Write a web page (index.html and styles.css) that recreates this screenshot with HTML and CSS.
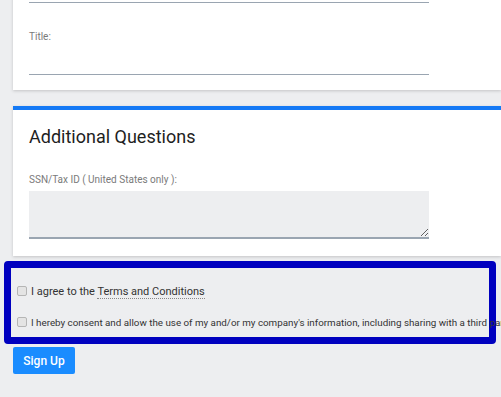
FILE: index.html
```html
<!DOCTYPE html>
<html lang="en">
<head>
    <meta charset="UTF-8">
    <meta name="viewport" content="width=device-width, initial-scale=1.0">
    <title>Sign Up</title>
    <link rel="stylesheet" href="styles.css">
</head>
<body>
    <div class="page">
        <!-- Contact details (scrolled partly out of view) -->
        <div class="card">
            <div class="field first">
                <label for="company">Company:</label>
                <input type="text" id="company">
            </div>
            <div class="field">
                <label for="title">Title:</label>
                <input type="text" id="title">
            </div>
        </div>

        <!-- Additional questions -->
        <div class="card card-accent">
            <h3>Additional Questions</h3>
            <div class="field first">
                <label for="ssn">SSN/Tax ID ( United States only ):</label>
                <textarea id="ssn"></textarea>
            </div>
        </div>

        <!-- Agreements -->
        <div class="terms">
            <div class="check-row big">
                <input type="checkbox" id="agree">
                <label for="agree">I agree to the <a href="#" class="terms-link">Terms and Conditions</a></label>
            </div>
            <div class="check-row">
                <input type="checkbox" id="consent">
                <label for="consent">I hereby consent and allow the use of my and/or my company's information, including sharing with a third party</label>
            </div>
        </div>

        <button class="button">Sign Up</button>
    </div>
</body>
</html>
```

FILE: styles.css
```css
body {
    font-family: Roboto, "Liberation Sans", Arial, sans-serif;
    margin: 0;
    background-color: #edeef0;
    color: #333;
    overflow: hidden;
}
.page {
    margin-top: -58px;
}
.card {
    background-color: #fff;
    margin-left: 13px;
    padding: 16px 0 15px 16px;
    box-shadow: 0 1px 3px rgba(0, 0, 0, 0.18);
}
.card-accent {
    margin-top: 16px;
    border-top: 4px solid #1479f5;
    padding-top: 15px;
    padding-bottom: 17px;
}
.card h3 {
    margin: 0 0 24px;
    font-size: 18px;
    font-weight: 400;
    line-height: 24px;
    color: #1e1e1e;
}
.field {
    margin-top: 27px;
    width: 400px;
}
.field.first {
    margin-top: 0;
}
.field label {
    display: block;
    font-size: 10px;
    line-height: 14px;
    color: #7a7a7a;
}
.field input {
    display: block;
    width: 100%;
    height: 31px;
    box-sizing: border-box;
    border: none;
    border-bottom: 1px solid #9aa5b1;
    background: transparent;
}
.field textarea {
    display: block;
    width: 100%;
    height: 48px;
    margin-top: 4px;
    box-sizing: border-box;
    border: none;
    border-bottom: 2px solid #9aa5b1;
    background-color: #edeef0;
}
.terms {
    margin: 5px 5px 0 4px;
    border: 7px solid #0000bf;
    border-radius: 4px;
    padding: 13px 0 5px 6px;
}
.check-row {
    display: flex;
    align-items: center;
    height: 20px;
    margin-top: 11px;
    white-space: nowrap;
    font-size: 9.8px;
}
.check-row.big {
    margin-top: 0;
    font-size: 11px;
}
.check-row input {
    appearance: none;
    width: 10px;
    height: 10px;
    margin: 0 4px 0 0;
    border: 1px solid #b5b5b5;
    border-radius: 2px;
    background-color: #e4e4e4;
    flex-shrink: 0;
}
.terms-link {
    color: #333;
    text-decoration: none;
    border-bottom: 1px dotted #888;
}
.button {
    margin: 3px 0 0 13px;
    width: 62px;
    height: 27px;
    padding: 0;
    font-family: Roboto, "Liberation Sans", Arial, sans-serif;
    font-size: 12px;
    font-weight: 500;
    background-color: #1a8cff;
    color: white;
    border: none;
    border-radius: 2px;
    cursor: pointer;
}
```
